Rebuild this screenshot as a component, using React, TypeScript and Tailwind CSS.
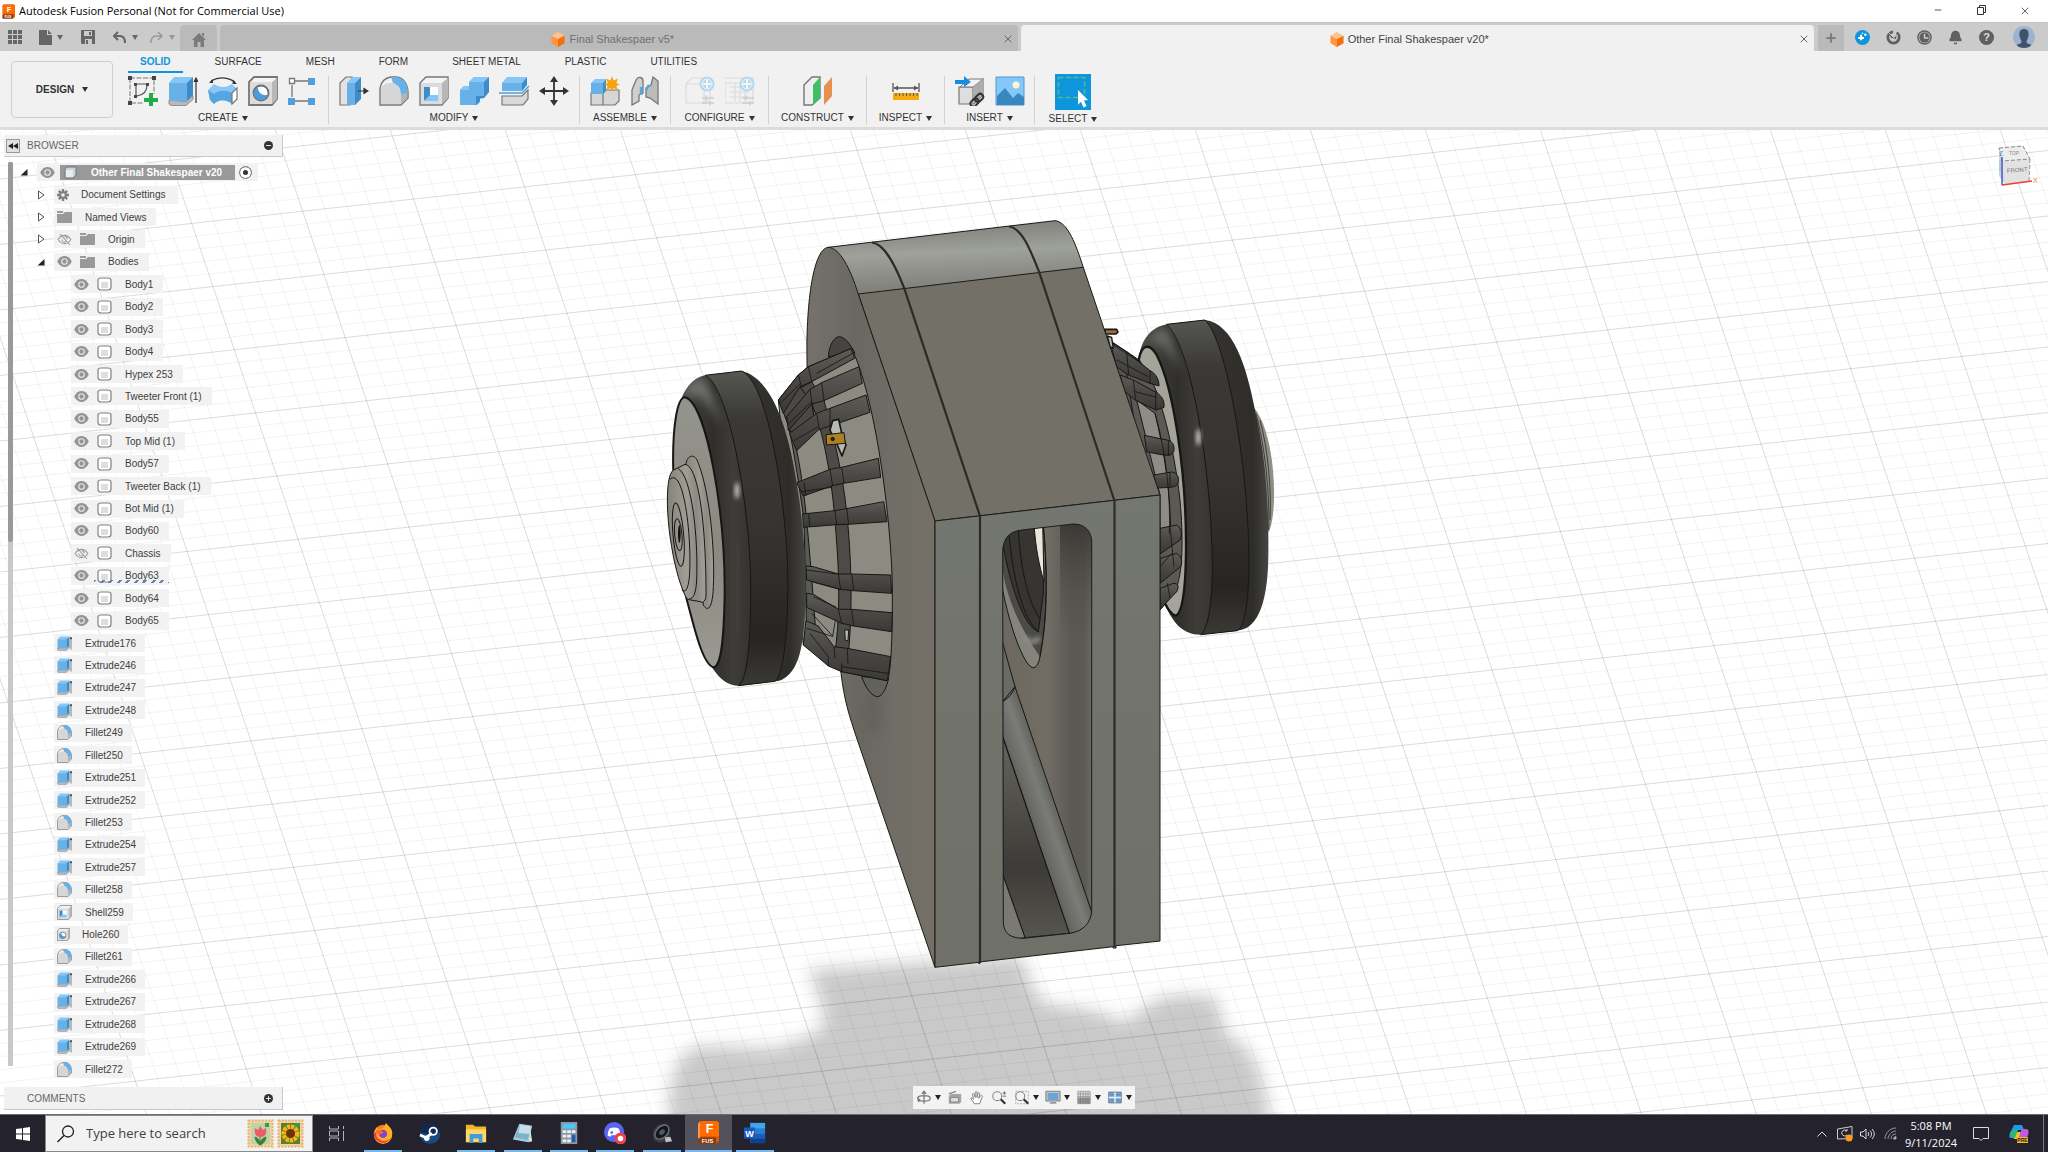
import React, { useState } from 'react';
import { Bell, Minus, Plus, X } from 'lucide-react';

type IconProps = { className?: string };

const Caret: React.FC<IconProps> = ({ className = 'fill-[#333]' }) => (
    <svg viewBox="0 0 6 5" className={`h-[5px] w-[6px] shrink-0 ${className}`}>
        <path d="M0 0h6L3 5z" />
    </svg>
);

/* ---------- small feature icons, shared by toolbar and browser ---------- */

const ExtrudeIcon = () => (
    <svg viewBox="0 0 30 30" className="h-full w-full">
        <path d="M1 24v4l2 1.500h15l7-6v-4l-7 6z" fill="#b9b9b9" stroke="#777" strokeWidth=".7" />
        <path d="M1 7l5-6h19l-6 7H1z" fill="#85c7f7" />
        <path d="M1 7h18v18H3l-2-2z" fill="#67b0e8" />
        <path d="M19 7l6-6v18l-6 6z" fill="#3d8cc6" />
        <path d="M28 27V4M26.300 5.500L28 2l1.700 3.500z" stroke="#333" fill="#333" strokeWidth="1.200" />
    </svg>
);

const FilletIcon = () => (
    <svg viewBox="0 0 30 30" className="h-full w-full">
        <path d="M1 12C2 6 6 2 12 1h6c7 1 11 8 11 16v5l-7 7H1z" fill="#f1f1f1" stroke="#777" strokeWidth="1.400" />
        <path d="M2 12C4 8 8 7 12 7c6 0 10 4 10 10v11H2z" fill="#d6d6d6" />
        <path d="M22 19l6-3v6l-6 6z" fill="#b4b4b4" />
        <path d="M12 1h6c7 1 11 8 11 15l-7 3c0-6-2-10-8-12z" fill="#67b0e8" />
    </svg>
);

const ShellIcon = () => (
    <svg viewBox="0 0 30 30" className="h-full w-full">
        <path d="M1 7l6-6h22v21l-6 7H1z" fill="#f4f4f4" stroke="#777" strokeWidth="1.400" />
        <path d="M23 7l6-5v20l-6 6z" fill="#b8b8b8" />
        <path d="M2 7h21v21H2z" fill="#dcdcdc" />
        <path d="M5 11h14v14H5z" fill="#fff" />
        <path d="M5 11h6v9l-6 5z" fill="#3d8cc6" />
        <path d="M5 25l6-6h8v6z" fill="#85c7f7" />
    </svg>
);

const HoleIcon = () => (
    <svg viewBox="0 0 30 30" className="h-full w-full">
        <path d="M1 6l5-5h23v22l-5 6H1z" fill="#f4f4f4" stroke="#777" strokeWidth="1.800" />
        <path d="M24 6l5-4v21l-5 5z" fill="#b8b8b8" />
        <path d="M2 6h22v22H2z" fill="#dcdcdc" />
        <circle cx="13" cy="17" r="7.500" fill="#fff" stroke="#6d6d6d" strokeWidth="1.800" />
        <path d="M10 11a7 7 0 1 0 9.500 8c-6 1-10-3-9.500-8z" fill="#4a9bd8" />
    </svg>
);

const SketchIcon = () => (
    <svg viewBox="0 0 30 30" className="h-full w-full">
        <path d="M2 2h24v16M2 2v25h14" fill="none" stroke="#777" strokeDasharray="5 1.500" />
        <g fill="#444">
            <path d="M0 0h4v4H0zM24 0h4v4h-4zM0 25h4v4H0zM6 7h3v3H6zM18 7h3v3h-3zM6 19h3v3H6z" />
        </g>
        <path d="M8 8h11M8 9v11M19 9c0 6-4 10-10 11" fill="none" stroke="#555" strokeWidth="1.200" />
        <path d="M21 17h4v5h5v4h-5v5h-4v-5h-5v-4h5z" fill="#1fac4b" />
    </svg>
);

const RevolveIcon = () => (
    <svg viewBox="0 0 30 30" className="h-full w-full">
        <path d="M3 5c7-4 16-4 24 1" fill="none" stroke="#333" strokeWidth="1.200" />
        <path d="M1 7l4-4v4zM29 8l-4-4-.500 4z" fill="#333" />
        <path d="M0 14l6-6c6 4 12 4 18 0l5 5v11l-5 4c-6-5-13-5-18 0L2 24z" fill="#85c7f7" />
        <path d="M0 14l6 4c5-4 12-4 18-1v11c-6-5-13-5-18 0l-4-4z" fill="#57a5e0" />
        <path d="M24 17l5-5v11l-5 5z" fill="#fff" stroke="#777" strokeWidth="1.200" />
    </svg>
);

const PatternIcon = () => (
    <svg viewBox="0 0 30 30" className="h-full w-full">
        <path d="M7 5h13M4 9v12M7 25h13" stroke="#777" strokeWidth="1.300" />
        <path d="M1.500 2.500h5v5h-5z" fill="#fff" stroke="#777" strokeWidth="1.300" />
        <path d="M20 2h7v7h-7zM0 22h7v7H0zM20 22h7v7h-7z" fill="#4fa0dc" />
    </svg>
);

const PressPullIcon = () => (
    <svg viewBox="0 0 30 30" className="h-full w-full">
        <path d="M1 7l6-6h6v27l-2 1H1z" fill="#e3e3e3" stroke="#777" strokeWidth="1.200" />
        <path d="M8 7l5-6h9l-6 6z" fill="#85c7f7" />
        <path d="M8 7h8v22H8z" fill="#67b0e8" />
        <path d="M16 7l6-6v22l-6 6z" fill="#3d8cc6" />
        <path d="M19 15h7M25 12.500l4 2.500-4 2.500z" stroke="#333" fill="#333" strokeWidth="1.200" />
    </svg>
);

const CombineIcon = () => (
    <svg viewBox="0 0 30 30" className="h-full w-full">
        <path d="M10 6l5-5h15v15l-5 6-4 1v3l-3 3H1V14l4-4h5z" fill="#67b0e8" />
        <path d="M10 6l5-5h15l-5 5zM1 14l4-4h5v4z" fill="#85c7f7" />
        <path d="M25 6l5-5v15l-5 6h-4v3l-4 4v-9h8z" fill="#3d8cc6" />
    </svg>
);

const SplitIcon = () => (
    <svg viewBox="0 0 30 30" className="h-full w-full">
        <path d="M3 7l5-6h20l-5 6z" fill="#85c7f7" />
        <path d="M3 7h20v8H3z" fill="#67b0e8" />
        <path d="M23 7l5-6v8l-5 6z" fill="#3d8cc6" />
        <path d="M0 17h23l7-7" fill="none" stroke="#4fa0dc" strokeWidth="1.500" />
        <path d="M3 20h20l6-6v9l-5 6H3z" fill="#d9d9d9" stroke="#777" strokeWidth="1.200" />
    </svg>
);

const MoveIcon = () => (
    <svg viewBox="0 0 30 30" className="h-full w-full">
        <path d="M15 4v22M4 15h22" stroke="#333" strokeWidth="1.800" />
        <path d="M15 0l4 6h-8zM15 30l4-6h-8zM0 15l6-4v8zM30 15l-6-4v8z" fill="#333" />
    </svg>
);

const ComponentIcon = () => (
    <svg viewBox="0 0 30 30" className="h-full w-full">
        <path d="M1 17h12v12H1zM13 17l3-3h13v11l-4 4H13z" fill="#d6d6d6" stroke="#777" strokeWidth="1.200" />
        <path d="M1 7l4-4h11l-3 4z" fill="#85c7f7" />
        <path d="M1 7h12v11H1z" fill="#67b0e8" />
        <path d="M13 7l3-4v11l-3 4z" fill="#3d8cc6" />
        <path d="M22 0l1.600 4.500L28 2.500 26.300 7 30 8.500 26.300 10 28 14l-4.400-2L22 16l-1.600-4L16 14l1.700-4L14 8.500 17.700 7 16 2.500l4.400 2z" fill="#f6a313" />
    </svg>
);

const JointIcon = () => (
    <svg viewBox="0 0 30 30" className="h-full w-full">
        <path d="M2 14L6 4c2-4 7-3 7 1v12l-4 2v6l-7 4z" fill="#cfcfcf" stroke="#777" strokeWidth="1.300" />
        <path d="M28 28V5l-5-4-2 8-5 3v9l4 1z" fill="#bcbcbc" stroke="#777" strokeWidth="1.300" />
        <path d="M11 11v8M19 9l-3 5" stroke="#57a5e0" strokeWidth="2.500" />
    </svg>
);

const ConfigIcon: React.FC<{ table?: boolean }> = ({ table }) => (
    <svg viewBox="0 0 30 30" className="h-full w-full">
        <g opacity=".4">
            <path d={table ? 'M0 2h28v25H0zM0 7h28M5 11h19M5 16h19M5 21h19M10 8v18M15 8v18M20 8v18' : 'M1 8l6-6h18v20l-5 5H1zM1 8h18v18'} fill="none" stroke="#bbb" strokeWidth="1.200" />
            <circle cx="22" cy="8" r="7.500" fill="#5bb3e6" />
            <circle cx="22" cy="8" r="5" fill="none" stroke="#fff" />
            <path d="M22 4v8M18 8h8" stroke="#fff" strokeWidth="2" />
            <path d="M17 22h12M17 27h12M21 19.500v5M25 24.500v5" stroke="#999" strokeWidth="1.500" />
        </g>
    </svg>
);

const PlaneIcon = () => (
    <svg viewBox="0 0 30 30" className="h-full w-full">
        <path d="M1 9l8-8h8v21l-8 7H1z" fill="#efefef" stroke="#777" strokeWidth="1.400" />
        <path d="M10 9l7-8v21l-7 7z" fill="#3fbf66" />
        <path d="M21 10l8-9v19l-8 9z" fill="#e79150" />
    </svg>
);

const MeasureIcon = () => (
    <svg viewBox="0 0 30 30" className="h-full w-full">
        <path d="M2 7v9M28 7v9M3 12h24" stroke="#555" strokeWidth="1.300" />
        <path d="M3 12l4-2.500v5zM27 12l-4-2.500v5z" fill="#555" />
        <path d="M2 17h26v7H2z" fill="#f9ab0e" />
        <path d="M5 17v3M8.500 17v3M12 17v3M15.500 17v3M19 17v3M22.500 17v3M26 17v3" stroke="#555" />
    </svg>
);

const InsertLinkIcon = () => (
    <svg viewBox="0 0 30 30" className="h-full w-full">
        <path d="M4 11h14v17H4zM18 11l10-8v16l-9 9z" fill="#dedede" stroke="#777" strokeWidth="1.200" />
        <path d="M6 10l8-7h14l-10 8H5z" fill="#f4f4f4" stroke="#777" />
        <path d="M18 11l10-8v16l-10 9z" fill="#adadad" />
        <path d="M0 4h9V0l7 6-7 5V8H0z" fill="#1b8be0" />
        <g fill="none" stroke="#333" strokeWidth="2" transform="rotate(-45 22 24)">
            <rect x="14" y="21" width="9" height="6" rx="3" />
            <rect x="20.500" y="21" width="9" height="6" rx="3" />
        </g>
    </svg>
);

const PictureIcon = () => (
    <svg viewBox="0 0 30 30" className="h-full w-full">
        <path d="M1 1h28v28H1z" fill="#85c7f9" stroke="#4a98d4" />
        <circle cx="21" cy="9" r="3.500" fill="#fff5cf" />
        <path d="M2 20l8-8 8 10 5-5 6 4v8H2z" fill="#3a86bf" />
    </svg>
);

const SelectIcon = () => (
    <svg viewBox="0 0 36 36" className="h-9 w-9">
        <path d="M0 0h36v36H0z" fill="#0d96db" />
        <path d="M3.500 3.500h26v20h-26z" fill="none" stroke="#56b98c" strokeWidth="1.600" strokeDasharray="5 2.500" />
        <path d="M23 16l10 10-4 .500 2.500 5.500-3 1.400-2.500-5.600-3 3z" fill="#fff" />
    </svg>
);

/* ---------- title bar and document tabs ---------- */

const FusionLogo: React.FC<IconProps> = ({ className }) => (
    <svg viewBox="0 0 22 24" className={className}>
        <path d="M2 0h18l2 2v18l-3 4H1V2z" fill="#e05a04" />
        <path d="M2 2l2-2h16l2 2v14H2z" fill="#ff6b00" />
        <path d="M1 17h18v7H1z" fill="#8a3a10" />
        <path d="M0 3l2-3v18H0z" fill="#ff9a4d" />
        <text x="12" y="13" fontSize="13" fontWeight="700" fill="#fff" textAnchor="middle" fontFamily="Liberation Sans">F</text>
        <text x="10" y="23" fontSize="6" fontWeight="700" fill="#fff" textAnchor="middle" fontFamily="Liberation Sans">FUS</text>
    </svg>
);

const CubeLogo = () => (
    <svg viewBox="0 0 14 16" className="h-[15px] w-[14px] shrink-0">
        <path d="M0 4l7-4 7 4-7 3.500z" fill="#fbc48b" />
        <path d="M0 4l7 3.500V16l-7-4z" fill="#ff9442" />
        <path d="M14 4L7 7.500V16l7-4z" fill="#f4700f" />
    </svg>
);

const TitleBar = () => (
    <header className="flex h-[22px] shrink-0 items-center bg-white pl-[2px]">
        <FusionLogo className="h-[15px] w-[13px]" />
        <h1 className="ml-1 font-['Open_Sans',sans-serif] text-[11px] text-black">Autodesk Fusion Personal (Not for Commercial Use)</h1>
        <div className="ml-auto flex text-[#333]">
            <button aria-label="Minimize" className="flex w-[43px] justify-center"><Minus size={10} strokeWidth={2} /></button>
            <button aria-label="Restore" className="flex w-[43px] justify-center">
                <svg viewBox="0 0 10 10" className="h-[10px] w-[10px] fill-none stroke-current"><path d="M1.500 2.500h6v7h-6zM3.500 2.500v-2h6v7h-2" /></svg>
            </button>
            <button aria-label="Close" className="flex w-[46px] justify-center"><X size={12} strokeWidth={1.500} /></button>
        </div>
    </header>
);

const DocumentTabs = () => (
    <div className="flex h-[29px] shrink-0 items-end border-t border-[#c4c4c4] bg-[#cbcbcb] text-[#666]">
        <div className="flex h-[28px] w-[180px] items-center pl-2">
            <button aria-label="Data panel">
                <svg viewBox="0 0 14 14" className="h-[14px] w-[14px] fill-current"><path d="M0 0h4v4H0zM5 0h4v4H5zM10 0h4v4h-4zM0 5h4v4H0zM5 5h4v4H5zM10 5h4v4h-4zM0 10h4v4H0zM5 10h4v4H5zM10 10h4v4h-4z" /></svg>
            </button>
            <button aria-label="File" className="ml-[17px] flex items-center gap-[5px]">
                <svg viewBox="0 0 13 15" className="h-[15px] w-[13px] fill-current"><path d="M0 0h8v5h5v10H0zM9 0l4 4H9z" /></svg>
                <Caret className="fill-[#666]" />
            </button>
            <button aria-label="Save" className="ml-[18px]">
                <svg viewBox="0 0 14 14" className="h-[14px] w-[14px]"><path d="M0 0h14v14H1l-1-1z" fill="#666" /><path d="M3 1h8v5H3zM4 9h7v5H4z" fill="#cbcbcb" /><path d="M8 2h2v3H8zM5 10h2v4H5z" fill="#666" /></svg>
            </button>
            <button aria-label="Undo" className="ml-[18px] flex items-center gap-[6px]">
                <svg viewBox="0 0 13 13" className="h-[13px] w-[13px]"><path d="M5 1L1 5l4 4M1 5h6c3 0 5 2 5 7" fill="none" stroke="#666" strokeWidth="2" /></svg>
                <Caret className="fill-[#666]" />
            </button>
            <button aria-label="Redo" className="ml-[12px] flex items-center gap-[6px]">
                <svg viewBox="0 0 13 13" className="h-[13px] w-[13px]"><path d="M8 1l4 4-4 4M12 5H6c-3 0-5 2-5 7" fill="none" stroke="#999" strokeWidth="1.500" /></svg>
                <Caret className="fill-[#999]" />
            </button>
        </div>
        <button aria-label="Home" className="flex h-[26px] w-[37px] items-center justify-center rounded-t bg-[#bababa]">
            <svg viewBox="0 0 14 14" className="mt-1 h-[14px] w-[14px] fill-[#7b7b7b]"><path d="M7 0l7 7h-2v7H8.500V9h-3v5H2V7H0zM10 0h2v4l-2-2z" /></svg>
        </button>
        <div className="ml-[3px] flex h-[26px] flex-1 items-center rounded-t bg-[#bababa] pt-[2px] pr-1 pl-1">
            <a href="#v5" className="flex flex-1 items-center justify-center gap-1 text-[11px] text-[#707070]"><CubeLogo />Final Shakespaer v5*</a>
            <button aria-label="Close tab"><X size={12} /></button>
        </div>
        <div className="ml-[3px] flex h-[26px] flex-1 items-center rounded-t bg-[#f1f1f1] pt-[2px] pr-1">
            <a href="#v20" className="flex flex-1 items-center justify-center gap-1 text-[11px] text-[#444]"><CubeLogo />Other Final Shakespaer v20*</a>
            <button aria-label="Close tab"><X size={12} /></button>
        </div>
        <button aria-label="New design" className="ml-1 flex h-[26px] w-[26px] items-center justify-center bg-[#bababa]"><Plus size={14} strokeWidth={3} className="text-[#777]" /></button>
        <div className="ml-[3px] flex h-[28px] items-center pr-[13px]">
            <button aria-label="Extensions" className="flex w-[31px] justify-center">
                <svg viewBox="0 0 16 16" className="h-[15px] w-[15px]"><circle cx="8" cy="8" r="8" fill="#0d96db" /><path d="M6.500 5v6M3.500 8.500h6" stroke="#fff" strokeWidth="2" /><circle cx="11" cy="5" r="1.300" fill="#fff" /><circle cx="8" cy="3.500" r=".8" fill="#fff" /></svg>
            </button>
            <button aria-label="Online status" className="flex w-[31px] justify-center">
                <svg viewBox="0 0 16 16" className="h-[15px] w-[15px]"><circle cx="8" cy="8" r="6" fill="none" stroke="#606060" strokeWidth="3" strokeDasharray="27 4" /><path d="M2 2l6 6 4-3-1 5-5-1" fill="#606060" stroke="#cbcbcb" /></svg>
            </button>
            <button aria-label="Job status" className="flex w-[31px] justify-center">
                <svg viewBox="0 0 16 16" className="h-[15px] w-[15px]"><circle cx="8" cy="8" r="7" fill="none" stroke="#606060" strokeWidth="1.500" /><circle cx="8" cy="8" r="5.500" fill="#606060" /><path d="M8 4v4.500h4" fill="none" stroke="#ccc" strokeWidth="1.500" /></svg>
            </button>
            <button aria-label="Notifications" className="flex w-[31px] justify-center"><Bell size={15} className="fill-[#606060] text-[#606060]" /></button>
            <button aria-label="Help" className="flex w-[31px] justify-center">
                <span className="flex h-[15px] w-[15px] items-center justify-center rounded-full bg-[#606060] text-[11px] font-bold text-[#ddd]">?</span>
            </button>
            <button aria-label="Account" className="ml-[11px] h-[22px] w-[22px] overflow-hidden rounded-full bg-[#9db3cd]">
                <svg viewBox="0 0 22 22"><path d="M11 3c4 0 5 3 4.500 7-.500 3-2 4-2 6 0 1.500 3 2 5 3v3h-15v-3c2-1 5-1.500 5-3 0-2-1.500-3-2-6C6 6 7 3 11 3z" fill="#3f526e" /></svg>
            </button>
        </div>
    </div>
);

/* ---------- ribbon ---------- */

const ribbonTabs = ['SOLID', 'SURFACE', 'MESH', 'FORM', 'SHEET METAL', 'PLASTIC', 'UTILITIES'];

const groups: { label: string; width: string; tools: { name: string; icon: React.ReactNode }[] }[] = [
    {
        label: 'CREATE', width: 'w-[211px]', tools: [
            { name: 'Create Sketch', icon: <SketchIcon /> },
            { name: 'Extrude', icon: <ExtrudeIcon /> },
            { name: 'Revolve', icon: <RevolveIcon /> },
            { name: 'Hole', icon: <HoleIcon /> },
            { name: 'Pattern', icon: <PatternIcon /> },
        ]
    },
    {
        label: 'MODIFY', width: 'w-[251px]', tools: [
            { name: 'Press Pull', icon: <PressPullIcon /> },
            { name: 'Fillet', icon: <FilletIcon /> },
            { name: 'Shell', icon: <ShellIcon /> },
            { name: 'Combine', icon: <CombineIcon /> },
            { name: 'Split Body', icon: <SplitIcon /> },
            { name: 'Move', icon: <MoveIcon /> },
        ]
    },
    { label: 'ASSEMBLE', width: 'w-[91px]', tools: [{ name: 'New Component', icon: <ComponentIcon /> }, { name: 'Joint', icon: <JointIcon /> }] },
    { label: 'CONFIGURE', width: 'w-[98px]', tools: [{ name: 'Configure', icon: <ConfigIcon /> }, { name: 'Configuration Table', icon: <ConfigIcon table /> }] },
    { label: 'CONSTRUCT', width: 'w-[98px]', tools: [{ name: 'Offset Plane', icon: <PlaneIcon /> }] },
    { label: 'INSPECT', width: 'w-[78px]', tools: [{ name: 'Measure', icon: <MeasureIcon /> }] },
    { label: 'INSERT', width: 'w-[90px]', tools: [{ name: 'Insert Derive', icon: <InsertLinkIcon /> }, { name: 'Canvas', icon: <PictureIcon /> }] },
    { label: 'SELECT', width: 'w-[76px]', tools: [{ name: 'Select', icon: <SelectIcon /> }] },
];

const Ribbon = () => {
    const [active, setActive] = useState('SOLID');

    return (
        <section className="flex h-[79px] shrink-0 border-b-[3px] border-[#dcdcdc] bg-[#f1f1f1] text-[10px] text-[#333]">
            <button className="mt-[10px] ml-[11px] flex h-[57px] w-[102px] shrink-0 items-center justify-center gap-2 rounded border border-[#cfcfcf] font-bold">
                DESIGN <Caret />
            </button>
            <div className="ml-1 flex flex-col">
                <nav className="ml-[11px] flex h-[22px] gap-5">
                    {ribbonTabs.map(tab => (
                        <button
                            key={tab}
                            onClick={() => setActive(tab)}
                            className={`border-b-2 px-3 ${tab === active ? 'border-[#0d96db] font-bold text-[#0d96db]' : 'border-transparent'}`}
                        >
                            {tab}
                        </button>
                    ))}
                </nav>
                <div className="ml-px flex">
                    {groups.map(group => (
                        <div key={group.label} className={`mt-[3px] flex h-[48px] shrink-0 flex-col items-center border-r border-[#d2d2d2] last:border-0 ${group.width}`}>
                            <div className="flex h-[31px] items-center gap-[10px]">
                                {group.tools.map(tool => (
                                    <button key={tool.name} aria-label={tool.name} className={tool.name === 'Select' ? 'h-9 w-9 shrink-0' : 'h-[30px] w-[30px] shrink-0'}>{tool.icon}</button>
                                ))}
                            </div>
                            <button className="mt-[5px] flex items-center gap-1 leading-[14px]">{group.label} <Caret /></button>
                        </div>
                    ))}
                </div>
            </div>
        </section>
    );
};

/* ---------- browser tree ---------- */

const Eye: React.FC<{ off?: boolean }> = ({ off }) => (
    <svg viewBox="0 0 16 12" className="h-[11px] w-[15px]">
        {off ? (
            <path d="M1 6c4-6 10-6 14 0-4 6-10 6-14 0zM3 0l11 12M5 6a3 3 0 0 0 5 2M8 3a3 3 0 0 1 3 3" fill="none" stroke="#999" strokeWidth="1.100" />
        ) : (
            <>
                <path d="M0 6c4-8 12-8 16 0-4 8-12 8-16 0z" fill="#949494" />
                <circle cx="8" cy="6" r="3" fill="none" stroke="#e5e5e5" strokeWidth="1.300" />
            </>
        )}
    </svg>
);

const Folder = () => (
    <svg viewBox="0 0 15 12" className="h-3 w-[15px]"><path d="M0 3h6l2-2h7v11H0zM0 0h6v2H0z" fill="#999" /></svg>
);

const Gear = () => (
    <svg viewBox="0 0 12 12" className="h-3 w-3">
        <g stroke="#808080" strokeWidth="2.400"><path d="M6 0v12M0 6h12M1.800 1.800l8.400 8.400M10.200 1.800l-8.400 8.400" /></g>
        <circle cx="6" cy="6" r="3.800" fill="#808080" />
        <circle cx="6" cy="6" r="1.800" fill="#f2f2f2" />
    </svg>
);

const BodyIcon = () => (
    <svg viewBox="0 0 15 14" className="h-[14px] w-[15px]">
        <path d="M1 3c0-1 1-2 3-2h7c2 0 3 1 3 2v7c0 2-1 3-3 3H4c-2 0-3-1-3-3z" fill="#fff" stroke="#808080" strokeWidth="1.200" />
        <path d="M4 5h7v6H4z" fill="#dedede" />
    </svg>
);

type Row = { name: string; off?: boolean };

const bodies: Row[] = ['Body1', 'Body2', 'Body3', 'Body4', 'Hypex 253', 'Tweeter Front (1)', 'Body55', 'Top Mid (1)', 'Body57', 'Tweeter Back (1)', 'Bot Mid (1)', 'Body60', 'Chassis', 'Body63', 'Body64', 'Body65']
    .map(name => ({ name, off: name === 'Chassis' }));

const features = ['Extrude176', 'Extrude246', 'Extrude247', 'Extrude248', 'Fillet249', 'Fillet250', 'Extrude251', 'Extrude252', 'Fillet253', 'Extrude254', 'Extrude257', 'Fillet258', 'Shell259', 'Hole260', 'Fillet261', 'Extrude266', 'Extrude267', 'Extrude268', 'Extrude269', 'Fillet272'];

const featureIcon = (name: string) => {
    if (name.startsWith('Extrude')) return <ExtrudeIcon />;
    if (name.startsWith('Fillet')) return <FilletIcon />;
    if (name.startsWith('Shell')) return <ShellIcon />;
    return <HoleIcon />;
};

const Expander: React.FC<{ open?: boolean }> = ({ open }) => (
    <button aria-label={open ? 'Collapse' : 'Expand'} className="mr-[7px] flex w-3 justify-center">
        <svg viewBox="0 0 8 10" className="h-[10px] w-2">
            {open ? <path d="M7.500 2v6.500H.500z" fill="#222" /> : <path d="M1.500 1v8L7 5z" fill="#fff" stroke="#555" />}
        </svg>
    </button>
);

const Browser = () => (
    <aside className="absolute inset-y-0 left-0 flex w-[283px] flex-col text-[10px] text-[#404040]">
        <div className="mt-[5px] ml-1 flex h-[22px] shrink-0 items-center border-r border-b border-[#c8c8c8] bg-[#f1f1f1] text-[#666]">
            <button aria-label="Collapse browser" className="ml-[2px] flex h-[14px] w-[14px] items-center justify-center border border-[#999] bg-[#e0e0e0]">
                <svg viewBox="0 0 10 6" className="h-[6px] w-[10px]"><path d="M5 0v6L0 3zM10 0v6L5 3z" fill="#222" /></svg>
            </button>
            <h2 className="ml-[7px]">BROWSER</h2>
            <button aria-label="Browser settings" className="mr-[9px] ml-auto flex h-[9px] w-[9px] items-center justify-center rounded-full bg-[#333] text-white"><Minus size={7} strokeWidth={3} /></button>
        </div>
        <div className="mt-1 mb-[7px] flex min-h-0 flex-1">
            <div className="mt-px mb-[14px] ml-2 w-[5px] bg-[#c8c8c8]"><div className="h-[42%] rounded-sm bg-[#999]" /></div>
            <ul className="flex flex-1 flex-col">
                <li className="flex flex-1 items-center pl-[5px]">
                    <Expander open />
                    <div className="flex h-[18px] items-center bg-[#f2f2f2] pr-[6px]">
                        <span className="flex w-5 justify-center"><Eye /></span>
                        <span className="ml-[3px] flex h-[15px] items-center bg-[#999] pr-[13px] pl-1 font-bold text-white">
                            <svg viewBox="0 0 13 13" className="mr-[14px] h-[13px] w-[13px]"><path d="M1 3l2-2h9v8l-3 3H1z" fill="#cbd3da" stroke="#777" /><path d="M2 4h7v7H2z" fill="#e8ecef" /></svg>
                            Other Final Shakespaer v20
                        </span>
                        <input type="radio" name="active-component" aria-label="Activate component" defaultChecked className="ml-1 h-[13px] w-[13px] appearance-none rounded-full border border-[#888] bg-[#333] ring-[3px] ring-white ring-inset" />
                    </div>
                </li>
                <li className="flex flex-1 items-center pl-[22px]">
                    <Expander />
                    <div className="flex h-[18px] items-center bg-[#f2f2f2] pr-3"><span className="ml-[3px]"><Gear /></span><span className="ml-3">Document Settings</span></div>
                </li>
                <li className="flex flex-1 items-center pl-[22px]">
                    <Expander />
                    <div className="flex h-[18px] items-center bg-[#f2f2f2] pr-[9px]"><span className="ml-[3px]"><Folder /></span><span className="ml-[13px]">Named Views</span></div>
                </li>
                {['Origin', 'Bodies'].map(name => (
                    <li key={name} className="flex flex-1 items-center pl-[22px]">
                        <Expander open={name === 'Bodies'} />
                        <div className="flex h-[18px] items-center bg-[#f2f2f2] pr-[10px]">
                            <span className="flex w-5 justify-center"><Eye off={name === 'Origin'} /></span>
                            <span className="ml-[6px]"><Folder /></span>
                            <span className="ml-[13px]">{name}</span>
                        </div>
                    </li>
                ))}
                {bodies.map(row => (
                    <li key={row.name} className="flex flex-1 items-center pl-[58px]">
                        <div className="relative flex h-[18px] items-center bg-[#f2f2f2] pr-[10px]">
                            <span className="flex w-5 justify-center"><Eye off={row.off} /></span>
                            <span className="ml-[6px]"><BodyIcon /></span>
                            <span className="ml-[13px]">{row.name}</span>
                            {row.name === 'Body63' && <span className="absolute right-0 bottom-[2px] left-[23px] h-[3px] bg-[repeating-linear-gradient(135deg,#6482ad_0px,#6482ad_2px,transparent_2px,transparent_6px)]" />}
                        </div>
                    </li>
                ))}
                {features.map(name => (
                    <li key={name} className="flex flex-1 items-center pl-[41px]">
                        <div className="flex h-[18px] items-center bg-[#f2f2f2] pr-[9px]">
                            <span className={name.startsWith('Hole') ? 'ml-[3px] h-[13px] w-[13px]' : 'ml-[3px] h-[15px] w-[15px]'}>{featureIcon(name)}</span>
                            <span className={name.startsWith('Hole') ? 'ml-3' : 'ml-[13px]'}>{name}</span>
                        </div>
                    </li>
                ))}
            </ul>
        </div>
        <div className="mb-1 ml-1 flex h-[23px] shrink-0 items-center border-r border-b border-[#c8c8c8] bg-[#f1f1f1] text-[#666]">
            <h2 className="ml-[23px]">COMMENTS</h2>
            <button aria-label="Add comment" className="mr-[9px] ml-auto flex h-[9px] w-[9px] items-center justify-center rounded-full bg-[#333] text-white"><Plus size={7} strokeWidth={3} /></button>
        </div>
    </aside>
);

/* ---------- 3D canvas ---------- */

const Grid = () => {
    const flat = Array.from({ length: 108 }, (_, i) => i - 15);
    const steep = Array.from({ length: 108 }, (_, i) => i - 10);
    return (
        <g fill="none">
            {flat.map(i => {
                const y = 310 + i * 13.1;
                return <path key={i} d={`M0 ${y}L2048 ${y - 225}`} stroke="#000" strokeOpacity={i % 5 === 0 ? 0.14 : 0.05} />;
            })}
            {steep.map(i => {
                const x = 358.3 + i * 23 - 0.3365 * 930;
                return <path key={i} d={`M${x} 130L${x + 0.3365 * 990} 1120`} stroke="#000" strokeOpacity={(i + 10) % 5 === 0 ? 0.14 : 0.05} />;
            })}
        </g>
    );
};

const leftTyre = 'M165 526L275 513C370 535 420 700 445 880C470 1050 475 1220 455 1335C442 1410 410 1440 378 1444L265 1457C215 1458 180 1400 160 1350C135 1280 118 1200 112 1190C90 1080 65 920 70 780C70 660 85 545 165 526Z';
const rightTyre = 'M535 485C540 435 560 385 620 373L735 360C820 370 860 500 885 630C915 760 927 900 925 1060C925 1190 900 1290 830 1292L720 1304C670 1304 640 1270 615 1215Z';
const slotOutline = 'M1002.700 552C1003 538 1010 531 1022 530L1073 524C1084 524 1091 530 1091.700 541V911C1091 922 1084 931 1070 933.300L1023 938.300C1011 938 1003.500 934 1003.300 922Z';

const Defs = () => (
    <defs>
        <linearGradient id="cap" x1="0" y1="0" x2=".12" y2="1">
            <stop offset="0" stopColor="#777772" /><stop offset=".4" stopColor="#9fa19b" /><stop offset=".65" stopColor="#8b8c86" /><stop offset="1" stopColor="#747168" />
        </linearGradient>
        <linearGradient id="side" x1="0" y1="0" x2="1" y2="0">
            <stop offset="0" stopColor="#74726b" /><stop offset=".4" stopColor="#696760" /><stop offset=".7" stopColor="#716e67" /><stop offset="1" stopColor="#747067" />
        </linearGradient>
        <linearGradient id="front" x1="0" y1="0" x2="0" y2="1">
            <stop offset="0" stopColor="#74776f" /><stop offset="1" stopColor="#6f7068" />
        </linearGradient>
        <linearGradient id="slotWall" gradientUnits="userSpaceOnUse" x1="1002" y1="0" x2="1092" y2="0">
            <stop offset="0" stopColor="#6c6860" /><stop offset=".5" stopColor="#716d65" /><stop offset=".78" stopColor="#5b5953" /><stop offset=".92" stopColor="#5c5a54" /><stop offset="1" stopColor="#6b6a63" />
        </linearGradient>
        <linearGradient id="slotTop" x1="0" y1="0" x2="0" y2="1">
            <stop offset="0" stopColor="#2f2e2b" stopOpacity=".8" /><stop offset=".6" stopColor="#44423e" stopOpacity=".3" /><stop offset="1" stopColor="#44423e" stopOpacity="0" />
        </linearGradient>
        <linearGradient id="tube" gradientUnits="userSpaceOnUse" x1="720" y1="560" x2="850" y2="515">
            <stop offset="0" stopColor="#4e4c48" /><stop offset=".4" stopColor="#6c6d68" /><stop offset=".65" stopColor="#7b7c77" /><stop offset="1" stopColor="#5a5954" />
        </linearGradient>
        <linearGradient id="floor" x1="0" y1="0" x2="0" y2="1">
            <stop offset="0" stopColor="#66645e" /><stop offset=".65" stopColor="#3d3b37" /><stop offset="1" stopColor="#57554f" />
        </linearGradient>
        <linearGradient id="tyre" x1="0" y1="0" x2="1" y2="0">
            <stop offset="0" stopColor="#4a4a46" /><stop offset=".3" stopColor="#2f2e2b" /><stop offset=".45" stopColor="#3e3d39" /><stop offset=".6" stopColor="#33322e" /><stop offset=".88" stopColor="#2e2d2a" /><stop offset="1" stopColor="#454541" />
        </linearGradient>
        <linearGradient id="tread" x1="0" y1="0" x2="0" y2="1">
            <stop offset="0" stopColor="#575752" /><stop offset=".15" stopColor="#3a3936" /><stop offset=".5" stopColor="#353430" /><stop offset=".85" stopColor="#262523" /><stop offset="1" stopColor="#3b3a37" />
        </linearGradient>
        <linearGradient id="dish" x1="0" y1="0" x2="0" y2="1">
            <stop offset="0" stopColor="#93948d" /><stop offset=".6" stopColor="#8b8980" /><stop offset="1" stopColor="#9b9a92" />
        </linearGradient>
        <linearGradient id="rib" x1="0" y1="0" x2="0" y2="1">
            <stop offset="0" stopColor="#5d5c57" /><stop offset=".45" stopColor="#4a4945" /><stop offset="1" stopColor="#3a3936" />
        </linearGradient>
        <linearGradient id="cone" x1="0" y1="0" x2="1" y2="0">
            <stop offset="0" stopColor="#85837a" /><stop offset=".5" stopColor="#a09d94" /><stop offset=".75" stopColor="#8b8a83" /><stop offset="1" stopColor="#a2a19a" />
        </linearGradient>
        <filter id="soft" x="-10%" y="-20%" width="120%" height="140%"><feGaussianBlur stdDeviation="26" /></filter>
        <filter id="glow" x="-100%" y="-50%" width="300%" height="200%"><feGaussianBlur stdDeviation="6" /></filter>
        <filter id="haze" x="-100%" y="-50%" width="300%" height="200%"><feGaussianBlur stdDeviation="14" /></filter>
        <clipPath id="leftTyre"><path d={leftTyre} /></clipPath>
        <clipPath id="rightTyre"><path d={rightTyre} /></clipPath>
        <clipPath id="slot"><path d={slotOutline} /></clipPath>
    </defs>
);

/* Both speakers are drawn at three units per pixel. */

const LeftBasket = () => (
    <g transform="translate(650 200) scale(.33333)" stroke="#161614" strokeWidth="3" strokeLinejoin="round">
        <path d="M535 470C538 430 555 410 568 410C585 412 600 430 615 460Z" fill="#454440" />
        <path d="M635 1430C645 1460 665 1490 683 1490C700 1488 710 1460 716 1435Z" fill="#62625d" />
        <path d="M385 600L445 525L475 500L605 445C680 600 730 1000 727 1200C727 1350 720 1440 710 1442L575 1415L460 1335Z" fill="#8c8b82" />
        <path d="M400 620C430 720 450 880 462 960L470 1300L500 1330C490 1200 480 1060 468 940C455 820 440 740 425 690Z" fill="#5b5a55" />
        <path d="M390 610L450 560L485 610L500 690L440 745Z" fill="#4a4945" />
        <path d="M450 560L485 610C530 720 550 880 558 1000C568 1120 572 1260 552 1375L592 1392C608 1250 605 1110 595 990C585 850 555 720 522 602L485 545Z" fill="#4c4b47" />
        <g fill="url(#rib)">
            <path d="M385 600L445 525L475 500L603 446L614 475L485 545L450 560L400 640Z" />
            <path d="M410 650L480 568L515 548L627 500L637 550L522 602L485 612L415 692Z" />
            <path d="M418 700L500 640L540 625L648 585L660 637L540 678L505 690L440 752Z" />
            <path d="M440 848L540 808L575 802L685 775L692 832L580 850L545 858L460 888Z" />
            <path d="M458 942L555 932L590 926L701 905L711 965L595 973L560 974L460 982Z" />
            <path d="M468 1098L490 1100L565 1122L605 1122L722 1125L725 1180L610 1172L570 1168L470 1140Z" />
            <path d="M470 1180L490 1183L565 1228L605 1228L727 1238L725 1295L610 1278L575 1270L470 1222Z" />
            <path d="M468 1262L505 1278L552 1340L592 1345L722 1370L712 1442L575 1415L535 1398L460 1335Z" />
        </g>
        <g fill="none" strokeWidth="2.500">
            <path d="M445 525L455 562L485 545L475 500M480 568L490 640M515 548L522 602M500 640L508 690M540 625V678M540 808L548 858M575 802L582 850M555 932L560 974M590 926L596 973M462 848L468 888M476 940L480 980M565 1122L572 1168M605 1122L611 1172M565 1228L575 1270M605 1228L611 1278M552 1340L555 1375M592 1345L594 1392M535 1370V1398M575 1390V1415" />
            <path d="M390 610L450 552M415 672L486 604M432 722L505 680M455 875L545 862M470 1110L560 1122M485 1145L570 1168M490 1190L560 1222M470 1285L550 1310M480 1300L535 1370M485 1240L548 1308L556 1262M500 520L608 460M575 1400L715 1420" />
        </g>
        <path d="M584 1290L596 1290L594 1322L586 1322Z" fill="#b5b5ae" />
        <path d="M540 690L548 662L566 658L574 695L588 735L576 768L562 735Z" fill="#b9b9b3" strokeWidth="5" />
        <path d="M528 704L582 698L586 730L530 735Z" fill="#ad8021" />
        <circle cx="548" cy="717" r="5" fill="#222" />
    </g>
);

const LeftDriver = () => (
    <g transform="translate(650 200) scale(.33333)" stroke="#161614" strokeWidth="3">
        <path d={leftTyre} fill="url(#tyre)" stroke="none" />
        <path d="M165 526L275 513C350 545 400 850 412 1080C418 1250 405 1420 375 1444L265 1457C295 1440 303 1300 302 1150C300 900 230 545 165 526Z" fill="url(#tread)" />
        <g clipPath="url(#leftTyre)">
            <path d="M90 590C110 545 140 528 160 532C180 560 200 620 210 680C180 610 150 570 90 590Z" fill="#6d6f6b" stroke="none" filter="url(#haze)" />
            <path d="M262 1030C262 1120 270 1230 262 1300" stroke="#474743" strokeWidth="14" fill="none" filter="url(#haze)" />
        </g>
        <path d="M105 592C172 610 226 950 224 1180C222 1310 215 1400 190 1402C155 1390 130 1270 108 1190L70 820C66 690 80 592 105 592Z" fill="url(#dish)" strokeWidth="6" />
        <path d="M108 790C113 765 135 758 145 790C180 880 195 1050 190 1160C188 1220 175 1240 160 1215Z" fill="url(#cone)" />
        <path d="M75 808L105 793C150 800 168 1000 168 1180C168 1205 160 1210 150 1205L112 1198C75 1140 42 950 55 850C60 820 65 812 75 808Z" fill="url(#cone)" />
        <g fill="none">
            <path d="M85 806C125 830 145 1010 140 1140C138 1180 130 1198 118 1196" />
            <path d="M60 838C100 800 125 1000 119 1120C116 1170 105 1180 95 1170" />
            <ellipse cx="85" cy="1004" rx="16" ry="95" transform="rotate(-5 85 1004)" />
            <ellipse cx="85" cy="1004" rx="11" ry="48" transform="rotate(-5 85 1004)" />
        </g>
        <ellipse cx="88" cy="1002" rx="4" ry="27" fill="#111" stroke="none" />
        <ellipse cx="261" cy="872" rx="5" ry="25" fill="#fff" stroke="none" filter="url(#glow)" />
    </g>
);

const RightDriver = () => (
    <g transform="translate(960 200) scale(.33333)" stroke="#161614" strokeWidth="3" strokeLinejoin="round">
        <path d="M880 620C932 680 947 830 941 920C938 965 930 995 922 1000Z" fill="#908e85" stroke="none" />
        <path d="M888 640C915 740 930 880 926 990M900 660C925 750 935 880 930 960" fill="none" strokeWidth="2" />
        <path d="M435 410L455 425L545 485L600 560L670 900L660 1160L600 1230L560 900Z" fill="#54534e" />
        <path d={rightTyre} fill="url(#tyre)" stroke="none" />
        <path d="M620 373L735 360C800 420 865 800 867 1080C867 1200 855 1280 832 1292L722 1304C745 1290 757 1200 757 1100C755 800 690 430 620 373Z" fill="url(#tread)" />
        <g clipPath="url(#rightTyre)">
            <path d="M560 425C580 390 600 380 620 385C640 430 655 480 665 530C640 460 600 420 560 425Z" fill="#666864" stroke="none" filter="url(#haze)" />
        </g>
        <path d="M536 480C545 430 570 430 590 465C640 560 680 820 678 1050C677 1180 665 1245 645 1247C630 1240 622 1225 615 1210L600 600Z" fill="#a5a49b" strokeWidth="7" />
        <path d="M545 490C590 540 640 720 660 900C670 1010 670 1120 645 1175L600 1225L560 900L500 520Z" fill="#5a5954" />
        <path d="M530 600L585 640C615 760 630 880 632 980L600 1060L600 885Z" fill="#8e8c84" />
        <g fill="url(#rib)">
            <path d="M450 425L500 455L570 512C590 520 598 545 597 558L570 550L505 525L470 500Z" />
            <path d="M480 525L520 540L590 578C608 590 614 605 612 622L587 630L525 600L495 575Z" />
            <path d="M553 706L620 720C640 722 645 740 641 755C636 768 625 770 560 755Z" />
            <path d="M582 825L635 816C655 820 658 835 654 850C648 862 640 862 590 864Z" />
            <path d="M600 985L650 975C665 985 668 1005 660 1020L600 1062Z" />
            <path d="M600 1075L650 1060C666 1070 668 1085 662 1100L600 1150Z" />
            <path d="M600 1165L640 1150C655 1150 658 1160 650 1175L600 1228Z" />
        </g>
        <path d="M500 455L506 525M520 540L527 600M570 512V552M587 578V632M470 480L565 530M525 575L590 592M460 435L545 490M585 640C620 760 632 900 628 1000M625 722V768M630 818V862M630 980L642 1100M600 1100L635 1060M622 1150L630 1195" fill="none" strokeWidth="2.500" />
        <path d="M434 388H470L474 396L468 402H436Z" fill="#a06a3c" strokeWidth="5" />
        <path d="M442 408L455 412L460 445L450 440Z" fill="#b5b5ae" strokeWidth="4" />
        <ellipse cx="715" cy="712" rx="5" ry="25" fill="#fff" stroke="none" filter="url(#glow)" />
    </g>
);

const Enclosure = () => (
    <g stroke="#1b1b19" strokeLinejoin="round">
        <path d="M828 247.300L1055 220.700C1068 222 1076 245 1083.300 267.300L1087 290L858.300 310Z" fill="url(#cap)" stroke="none" />
        <path d="M858.300 294L1083.300 267.300L1160 495L935 521Z" fill="#737067" />
        <path d="M935 521L858.300 294C850 268 840 248 828.300 247.300C812 249 806 310 807 360C807 460 820 600 841 673C844 700 850 718 856 736L935 967.300Z" fill="url(#side)" />
        <path d="M828.300 247.300L1055 220.700C1068 222 1076 245 1083.300 267.300" fill="none" />
        <path d="M935 521L1160 495V941L1116 945.700V948H1113V946.700L981.700 961.700L979 964V962.300L935 967.300Z" fill="url(#front)" />
        <path d="M872 242.500C884 244 894 262 904 287.700L980 516V963" fill="none" stroke="#2c2b29" strokeWidth="2.200" />
        <path d="M1009 226.500C1021 228 1029 246 1039 271.700L1114.500 501V947" fill="none" stroke="#2c2b29" strokeWidth="2.200" />
    </g>
);

const Slot = () => (
    <g>
        <g clipPath="url(#slot)">
            <path d="M1000 520H1095V940H1000Z" fill="url(#slotWall)" />
            <path d="M1060 520H1095V640H1060Z" fill="url(#slotTop)" />
            <g transform="translate(960 200) scale(.33333)" stroke="#161614" strokeWidth="3">
                <path d="M120 980H250C262 1100 265 1250 240 1370C235 1395 228 1403 218 1403C190 1395 150 1280 128 1170Z" fill="#84847d" />
                <path d="M120 980H246C258 1100 262 1220 240 1370C190 1300 140 1200 128 1110Z" fill="#4b4a46" stroke="none" />
                <path d="M120 970H240C255 1080 250 1150 250 1180L235 1295C190 1280 150 1150 130 1040Z" fill="#363531" />
                <path d="M222 970H248L252 1145C238 1100 226 1040 222 970Z" fill="#e9e7dc" />
                <path d="M148 1010C160 1140 190 1260 235 1295M175 990C182 1110 205 1210 242 1260M250 980C262 1100 262 1250 240 1370" fill="none" />
                <path d="M190 1310C210 1330 225 1330 238 1312" stroke="#8c8c87" strokeWidth="14" fill="none" filter="url(#glow)" />
            </g>
            <g transform="translate(780 640) scale(.33333)" stroke="#161614" strokeWidth="3">
                <path d="M660 -20L705 140L668 185Z" fill="#6b6a64" />
                <path d="M668 185Q695 170 705 140L940 830L900 900L868 880L668 288Z" fill="url(#tube)" />
                <path d="M668 292L868 880L735 893L668 703Z" fill="url(#floor)" />
                <path d="M668 703L735 893L690 900L660 860Z" fill="#7a7973" />
            </g>
        </g>
        <path d={slotOutline} fill="none" stroke="#1b1b19" />
    </g>
);

const Canvas = () => (
    <svg viewBox="0 130 2048 984" preserveAspectRatio="xMidYMid slice" className="absolute inset-0 h-full w-full" role="img" aria-label="Speaker enclosure model">
        <Defs />
        <path d="M85 990L460 966L725 950C745 1010 765 1075 810 1098C900 1095 970 1120 1040 1148C1080 1110 1130 1068 1200 1066L1300 1068C1325 1110 1325 1160 1350 1195C1420 1215 1455 1300 1475 1480H-330C-340 1350 -320 1260 -270 1230C-200 1205 -90 1235 0 1220C60 1200 110 1180 135 1160C130 1100 110 1040 85 990Z" transform="translate(780 640) scale(.33333)" fill="#c9c9c9" filter="url(#soft)" />
        <Grid />
        <RightDriver />
        <Enclosure />
        <ellipse cx="874" cy="712" rx="10" ry="24" fill="#55544f" opacity=".35" filter="url(#glow)" />
        <LeftBasket />
        <LeftDriver />
        <Slot />
    </svg>
);

const ViewCube = () => (
    <svg viewBox="0 0 46 46" className="absolute top-[12px] right-[5px] h-[46px] w-[46px]" fontFamily="Liberation Sans">
        <path d="M2 6L26 4L33 17L32 40L8 42L5 19Z" fill="#e2e2e2" />
        <path d="M2 6L5 19L8 42L2 34Z" fill="#cfd6dc" />
        <path d="M2 6L26 4L33 17L5 19Z" fill="#ededed" stroke="#888" strokeDasharray="4 2" />
        <path d="M33 17L32 40" stroke="#999" strokeDasharray="4 2" />
        <path d="M5 15V43" stroke="#4c55d8" strokeWidth="1.500" />
        <path d="M3 18V30" stroke="#8fd48b" />
        <path d="M5 43L35 39" stroke="#ee3e32" strokeWidth="1.500" />
        <text x="12" y="13" fontSize="5" fill="#888">TOP</text>
        <text x="10" y="31" fontSize="6" fill="#777" transform="rotate(-5 10 31)">FRONT</text>
        <text x="2" y="14" fontSize="7" fill="#4aa3e8">Z</text>
        <text x="36" y="41" fontSize="7" fill="#f0784a">X</text>
    </svg>
);

const navTools = [
    { name: 'Orbit', caret: true, icon: <path d="M9 1v14M6.500 4L9 1l2.500 3M2 9c0-4 14-4 14 0s-14 4-14 0M5 11l-3-2 1 4" fill="none" stroke="#777" strokeWidth="1.400" /> },
    { name: 'Look At', icon: <><path d="M2 6l3-2h11v9l-2 2H2z" fill="#a5a5a5" /><path d="M4 8h9v5H4z" fill="#d5dde5" stroke="#777" strokeWidth=".8" /><path d="M2 4l8-3" stroke="#888" strokeWidth="1.500" /></> },
    { name: 'Pan', icon: <path d="M6 15l-4-6c1-1 2 0 3 1L4 4c1-1 2 0 2 1l1 3V2c1-1 2-1 2 0v6l1-5c1-1 2 0 2 1l-1 5 2-3c1-1 2 0 2 1l-3 8z" fill="#fff" stroke="#777" /> },
    { name: 'Zoom', icon: <><circle cx="7" cy="6.500" r="5" fill="#edf5fb" stroke="#888" strokeWidth="1.200" /><path d="M11 10l5 5" stroke="#333" strokeWidth="2.500" /><path d="M13 3h4M15 1v4M13 6.500h4" stroke="#555" strokeWidth=".9" /></> },
    { name: 'Fit', caret: true, icon: <><path d="M2 1h14v14H2z" fill="none" stroke="#999" strokeDasharray="2 1.500" strokeWidth=".9" /><circle cx="7" cy="6.500" r="5" fill="#edf5fb" stroke="#888" strokeWidth="1.200" /><path d="M11 10l5 5" stroke="#333" strokeWidth="2.500" /></> },
    { name: 'Display Settings', caret: true, icon: <><path d="M1 1h16v11H1z" fill="#c5c5c5" stroke="#777" /><path d="M3 3h12v8H3z" fill="#6ba4d6" /><path d="M6 13h6l1 2H5z" fill="#999" /></> },
    { name: 'Grid and Snaps', caret: true, icon: <><path d="M2 1h14v14H2z" fill="#ddd" /><path d="M2 8h14v7H2z" fill="#999" /><path d="M2 1h14v14H2zM2 4h14M2 7h14M2 10h14M2 12.500h14M5 1v14M8 1v14M11 1v14M13.500 1v14" fill="none" stroke="#777" strokeWidth=".6" /></> },
    { name: 'Viewports', caret: true, icon: <><path d="M2 2h14v12H2z" fill="#78a9d6" stroke="#667" /><path d="M9 2v12M2 8h14" stroke="#e8eef5" strokeWidth="1.500" /><path d="M4 5h3M11 5h3M4 11h3M11 11h3" stroke="#3d6ea0" /></> },
];

const NavBar = () => (
    <div className="absolute bottom-[5px] left-1/2 flex h-[23px] w-[222px] -translate-x-1/2 items-center justify-between bg-[#f3f3f3] px-[3px]">
        {navTools.map(tool => (
            <button key={tool.name} aria-label={tool.name} className="flex items-center gap-[3px]">
                <svg viewBox="0 0 18 16" className="h-[15px] w-4">{tool.icon}</svg>
                {tool.caret && <Caret className="fill-[#222]" />}
            </button>
        ))}
    </div>
);

/* ---------- taskbar ---------- */

const Stamp: React.FC<{ sun?: boolean }> = ({ sun }) => (
    <svg viewBox="0 0 27 29" className="h-[29px] w-[27px]">
        <path d="M1.500 1.500h24v26h-24z" fill="#f4d3a3" stroke="#e6b06a" strokeWidth="2" strokeDasharray="2 1.300" />
        <path d="M4 4h19v21H4z" fill={sun ? '#5a7f33' : '#bfd3a8'} />
        {sun ? (
            <>
                <circle cx="13.500" cy="14.500" r="6.500" fill="none" stroke="#f9b516" strokeWidth="5" strokeDasharray="3 .8" />
                <circle cx="13.500" cy="14.500" r="4.500" fill="#6b3410" />
            </>
        ) : (
            <>
                <path d="M13 26V16M8 18c1 5 3 7 5 8 3-1 5-3 6-8-4 1-5 4-6 6-1-3-2-5-5-6z" fill="#38803c" stroke="#38803c" />
                <path d="M8 9l3 2 2-4 3 4 3-2c1 6-1 9-5.500 9S7 15 8 9z" fill="#ef5a68" />
            </>
        )}
        <path d="M18 4h4v4h-4z" fill="#2f9e56" />
    </svg>
);

const apps: { name: string; running?: boolean; active?: boolean; icon: React.ReactNode }[] = [
    {
        name: 'Firefox', running: true, icon: <>
            <circle cx="12" cy="13" r="10" fill="#ff7a1a" /><path d="M15 1c4 4 8 7 7 13a10 10 0 0 1-20 0c0-3 1-5 3-8 1 2 2 2 4 2 3-1 5-3 6-7z" fill="#ffb01f" /><path d="M2 12a10 10 0 0 0 19 5c-3 4-9 5-13 2C5 17 4 14 5 11z" fill="#f5344e" /><circle cx="12" cy="13" r="4.500" fill="#8a3fd0" /><path d="M4 9c4-1 6 1 9 2-1 2-4 2-5 3-2-1-4-2-4-5z" fill="#ff6a2a" />
        </>
    },
    {
        name: 'Steam', icon: <>
            <circle cx="12" cy="12" r="11" fill="#174a82" /><path d="M1 10a11 11 0 0 1 22 0l-6 4z" fill="#12284f" /><circle cx="15.500" cy="9" r="4" fill="none" stroke="#fff" strokeWidth="2" /><path d="M1 13l7 3 6-5" fill="none" stroke="#fff" strokeWidth="3" /><circle cx="8.500" cy="16.500" r="3" fill="#fff" />
        </>
    },
    { name: 'File Explorer', running: true, icon: <><path d="M1 3h8l2 2h12v17H1z" fill="#f0b429" /><path d="M1 8h22v14H1z" fill="#ffd864" /><path d="M5 13h14v10h-4v-5H9v5H5z" fill="#3f9be0" /></> },
    { name: 'Notepad', running: true, icon: <><path d="M8 2l14 2-4 18-17-3z" fill="#aacfdc" /><path d="M9 3l12 2-4 15-14-3z" fill="#79b4c9" /><path d="M9 3l12 2-2 8-12-1z" fill="#c5e0ea" /><path d="M20 8l2 13-4 1z" fill="#ddd" /></> },
    { name: 'Calculator', running: true, icon: <><path d="M3 0h18v24H3z" fill="#8c97a5" /><path d="M5 2h14v5H5z" fill="#4cc7f3" /><path d="M5 9h4v3H5zM10 9h4v3h-4zM15 9h4v3h-4zM5 14h4v3H5zM10 14h4v3h-4zM5 19h4v3H5zM10 19h4v3h-4z" fill="#eef1f4" /><path d="M15 14h4v8h-4z" fill="#1b5fa8" /></> },
    { name: 'Discord', running: true, icon: <><circle cx="11" cy="11" r="11" fill="#5865f2" /><path d="M6 7c3-1.500 7-1.500 10 0 1.500 3 2 5 2 8l-3 1-1-1.500h-6L7 16l-3-1c0-3 .500-5 2-8z" fill="#fff" /><circle cx="8.500" cy="11.500" r="1.500" fill="#5865f2" /><circle cx="18" cy="18" r="6.500" fill="#e64550" /><circle cx="18" cy="18" r="3" fill="#fff" /></> },
    { name: 'Speaker tool', running: true, icon: <><path d="M2 14C2 6 8 1 16 2l5 12-5 7c-6 3-14 2-14-7z" fill="#3a3d42" /><ellipse cx="12" cy="11" rx="9" ry="6" transform="rotate(-45 12 11)" fill="#14171b" stroke="#6b7178" strokeWidth="1.500" /><ellipse cx="12" cy="11" rx="3.500" ry="2.500" transform="rotate(-45 12 11)" fill="#4a5b6d" /><path d="M15 17l6-1 2 5-7 1z" fill="#bfc3c7" /></> },
    { name: 'Fusion', running: true, active: true, icon: null },
    { name: 'Word', running: true, icon: <><path d="M7 1h16v22H7z" fill="#2b7cd3" /><path d="M7 1h16v6H7z" fill="#41a5ee" /><path d="M7 13h16v5H7z" fill="#185abd" /><path d="M7 18h16v5H7z" fill="#103f91" /><path d="M0 6h12v12H0z" fill="#185abd" /><text x="6" y="16" fontSize="10" fontWeight="700" fill="#fff" textAnchor="middle" fontFamily="Liberation Sans">W</text></> },
];

const Taskbar = () => (
    <footer className="flex h-[38px] shrink-0 items-stretch border-t border-[#6b6b70] bg-[#24222c] font-['Open_Sans',sans-serif] text-white">
        <button aria-label="Start" className="flex w-[45px] items-center justify-center">
            <svg viewBox="0 0 14 14" className="h-[14px] w-[14px] fill-white"><path d="M0 2l6-.8v5.300H0zM7 1l7-1v6.500H7zM0 7.500h6v5.300L0 12zM7 7.500h7V14l-7-1z" /></svg>
        </button>
        <label className="flex w-[268px] items-center border border-[#8a8a8a] bg-[#f2f2f2] pr-2 pl-[11px]">
            <svg viewBox="0 0 18 18" className="h-[18px] w-[18px] shrink-0"><circle cx="11" cy="6.500" r="5.500" fill="none" stroke="#222" strokeWidth="1.300" /><path d="M7 10.500L.500 17" stroke="#222" strokeWidth="1.500" /></svg>
            <input type="text" aria-label="Search" placeholder="Type here to search" className="ml-[11px] min-w-0 flex-1 bg-transparent text-[13px] outline-none placeholder:text-[#404040]" />
            <span className="flex gap-[3px]"><Stamp /><Stamp sun /></span>
        </label>
        <button aria-label="Task View" className="flex w-[47px] items-center justify-center">
            <svg viewBox="0 0 17 15" className="h-[15px] w-[17px] fill-none stroke-[#b5b5b5]"><path d="M1.500 0v3h9V0M1.500 15v-3h9v3M1.500 5v5h9V5zM15.500 0v3M15.500 5v10" /></svg>
        </button>
        <div className="flex w-[418px]">
            {apps.map(app => (
                <button key={app.name} aria-label={app.name} className={`flex flex-1 flex-col items-center ${app.active ? 'bg-[#53515a]' : ''}`}>
                    <span className="flex flex-1 items-center">
                        {app.icon ? <svg viewBox="0 0 24 24" className="h-[22px] w-[22px]">{app.icon}</svg> : <FusionLogo className="h-[23px] w-[21px]" />}
                    </span>
                    {app.running && <span className={`h-[2px] bg-[#76b9ed] ${app.active ? 'w-full' : 'w-[38px]'}`} />}
                </button>
            ))}
        </div>
        <div className="ml-auto flex items-center">
            <button aria-label="Show hidden icons" className="flex w-[22px] justify-center">
                <svg viewBox="0 0 10 6" className="h-[6px] w-[10px] fill-none stroke-[#ddd]"><path d="M.500 5.500L5 1l4.500 4.500" /></svg>
            </button>
            <button aria-label="Update" className="flex w-[23px] justify-center">
                <svg viewBox="0 0 16 16" className="h-4 w-4 fill-none stroke-[#ccc]"><path d="M.500 3L15 .500v12L.500 13zM10 5a3 3 0 1 0 0 4M10 3v2H8" /><circle cx="12" cy="12" r="3.500" fill="#ff9a1f" stroke="none" /></svg>
            </button>
            <button aria-label="Volume" className="flex w-[23px] justify-center">
                <svg viewBox="0 0 15 12" className="h-3 w-[15px] fill-none stroke-[#ddd]"><path d="M.500 4v4H3l3 3V1L3 4zM8 4c1 1 1 3 0 4M10 2.500c2 2 2 5 0 7M12 1c3 3 3 7 0 10" /></svg>
            </button>
            <button aria-label="Network" className="flex w-[23px] justify-center">
                <svg viewBox="0 0 13 13" className="h-[13px] w-[13px] fill-none stroke-[#999]"><path d="M1 12C1 6 6 1 12 1M4 12c0-4 4-8 8-8M7 12c0-3 2-5 5-5" /><path d="M9.500 12c0-1 1-2.500 2.500-2.500V12z" fill="#ddd" /></svg>
            </button>
            <div className="w-[58px] text-center text-[11px] leading-[17px]">
                <div>5:08 PM</div>
                <div>9/11/2024</div>
            </div>
            <button aria-label="Action center" className="flex w-[42px] justify-center">
                <svg viewBox="0 0 16 16" className="h-4 w-4 fill-none stroke-[#ddd]"><path d="M.500 1.500h15v11H10l-2 2-2-2H.500z" /></svg>
            </button>
            <button aria-label="Copilot" className="flex w-[34px] justify-center">
                <svg viewBox="0 0 20 20" className="h-5 w-5"><path d="M5 1h8l2 5H8L5 14H2c-2 0-2-2-1-5z" fill="#1e9be8" /><path d="M2 9l3 6h5l2-7H8z" fill="#f5c22b" /><path d="M1 9l3 5h2L9 6H4z" fill="#35b56a" /><path d="M13 5h4c3 0 3 3 2 6l-2 5H9l3-9z" fill="#c45ae0" /><path d="M8 13h11v6H8z" fill="#f7b526" /><text x="13.500" y="18" fontSize="5" fontWeight="700" textAnchor="middle" fill="#222" fontFamily="Liberation Sans">PRE</text></svg>
            </button>
            <span className="ml-[7px] h-full w-[5px] border-l border-[#77757f]" />
        </div>
    </footer>
);

export default function App() {
    return (
        <div className="flex h-screen min-h-[700px] flex-col overflow-hidden bg-white font-['Liberation_Sans',Arial,sans-serif]">
            <TitleBar />
            <DocumentTabs />
            <Ribbon />
            <main className="relative flex-1 overflow-hidden bg-white">
                <Canvas />
                <Browser />
                <ViewCube />
                <NavBar />
            </main>
            <Taskbar />
        </div>
    );
}
